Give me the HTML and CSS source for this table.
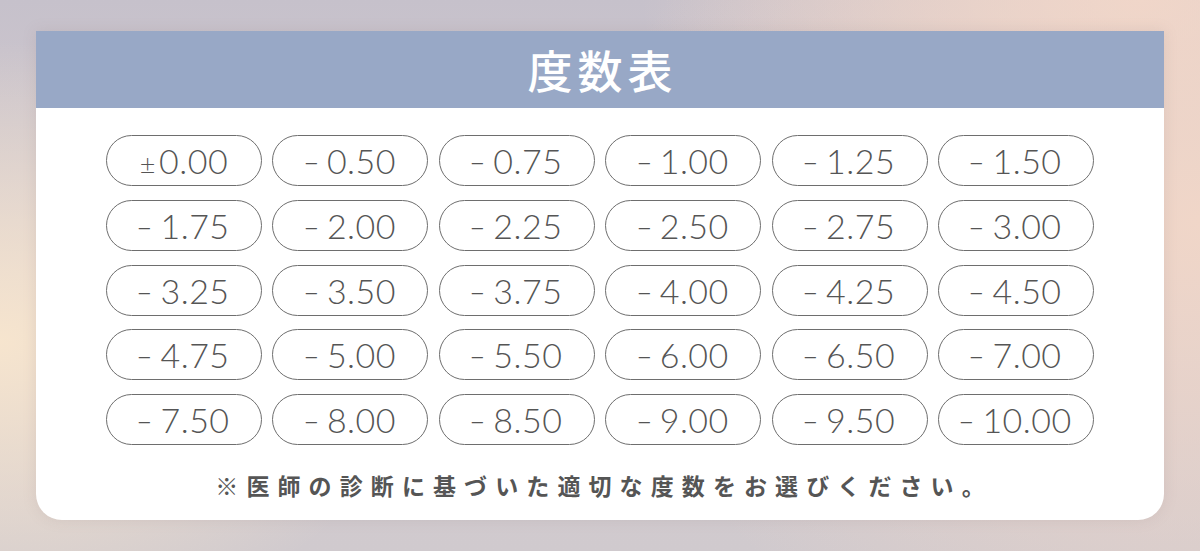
FILE: index.html
```html
<!DOCTYPE html>
<html lang="ja">
<head>
<meta charset="utf-8">
<title>度数表</title>
<link rel="stylesheet" href="styles.css">
</head>
<body>
<main class="card">
  <header class="card-head"><h1 class="title">度数表</h1></header>
  <section class="card-body">
    <ul class="grid">
      <li class="pill"><span class="pm">±</span>0.00</li>
      <li class="pill"><span class="sign">-</span>0.50</li>
      <li class="pill"><span class="sign">-</span>0.75</li>
      <li class="pill"><span class="sign">-</span>1.00</li>
      <li class="pill"><span class="sign">-</span>1.25</li>
      <li class="pill"><span class="sign">-</span>1.50</li>
      <li class="pill"><span class="sign">-</span>1.75</li>
      <li class="pill"><span class="sign">-</span>2.00</li>
      <li class="pill"><span class="sign">-</span>2.25</li>
      <li class="pill"><span class="sign">-</span>2.50</li>
      <li class="pill"><span class="sign">-</span>2.75</li>
      <li class="pill"><span class="sign">-</span>3.00</li>
      <li class="pill"><span class="sign">-</span>3.25</li>
      <li class="pill"><span class="sign">-</span>3.50</li>
      <li class="pill"><span class="sign">-</span>3.75</li>
      <li class="pill"><span class="sign">-</span>4.00</li>
      <li class="pill"><span class="sign">-</span>4.25</li>
      <li class="pill"><span class="sign">-</span>4.50</li>
      <li class="pill"><span class="sign">-</span>4.75</li>
      <li class="pill"><span class="sign">-</span>5.00</li>
      <li class="pill"><span class="sign">-</span>5.50</li>
      <li class="pill"><span class="sign">-</span>6.00</li>
      <li class="pill"><span class="sign">-</span>6.50</li>
      <li class="pill"><span class="sign">-</span>7.00</li>
      <li class="pill"><span class="sign">-</span>7.50</li>
      <li class="pill"><span class="sign">-</span>8.00</li>
      <li class="pill"><span class="sign">-</span>8.50</li>
      <li class="pill"><span class="sign">-</span>9.00</li>
      <li class="pill"><span class="sign">-</span>9.50</li>
      <li class="pill"><span class="sign">-</span>10.00</li>
    </ul>
    <p class="note">※医師の診断に基づいた適切な度数をお選びください。</p>
  </section>
</main>
</body>
</html>
```
FILE: styles.css
```css
html, body {
  margin: 0;
  height: 551px;
  overflow: hidden;
}
body {
  box-sizing: border-box;
  padding: 31px 36px 0;
  background:
    radial-gradient(ellipse 420px 300px at 0% 62%, rgba(248,230,206,0.95), rgba(248,230,206,0) 100%),
    radial-gradient(ellipse 600px 500px at 100% 40%, rgba(240,214,200,1), rgba(240,214,200,0) 100%),
    radial-gradient(ellipse 500px 300px at 95% 0%, rgba(240,214,202,1), rgba(240,214,202,0) 100%),
    linear-gradient(180deg, #c6c1cb 0%, #d6ccd0 50%, #d0cace 100%);
  font-family: "Noto Sans CJK JP", "Noto Sans", sans-serif;
}
.card {
  display: flex;
  flex-direction: column;
  background: #fff;
  border-radius: 0 0 26px 26px;
  box-shadow: 0 0 14px rgba(150, 130, 130, 0.18);
  height: 489px;
  overflow: hidden;
}
.card-head {
  height: 77px;
  background: #98a8c6;
  display: flex;
  align-items: center;
  justify-content: center;
}
.title {
  margin: 0;
  color: #fff;
  font-size: 45px;
  font-weight: 500;
  letter-spacing: 5px;
  padding-left: 5px;
  line-height: 1;
}
.card-body {
  padding: 27px 70px 0;
}
.grid {
  list-style: none;
  margin: 0;
  padding: 0;
  display: grid;
  grid-template-columns: repeat(6, 1fr);
  column-gap: 10.4px;
  row-gap: 13.75px;
}
.pill {
  height: 51px;
  box-sizing: border-box;
  border: 1px solid #6e6e6e;
  border-radius: 26px;
  display: flex;
  align-items: center;
  justify-content: center;
  font-family: "Lato", "Open Sans", sans-serif;
  font-weight: 300;
  font-size: 34px;
  letter-spacing: 0.5px;
  color: #555;
}
.sign {
  display: inline-block;
  transform: scaleX(1.4);
  margin-right: 9px;
}
.pm {
  font-size: 27px;
  margin-right: 3px;
  margin-top: 5px;
}
.note {
  margin: 28px 0 0;
  text-align: center;
  font-size: 23px;
  font-weight: 700;
  line-height: 24px;
  letter-spacing: 8.1px;
  padding-left: 8.1px;
  color: #555;
}
```
